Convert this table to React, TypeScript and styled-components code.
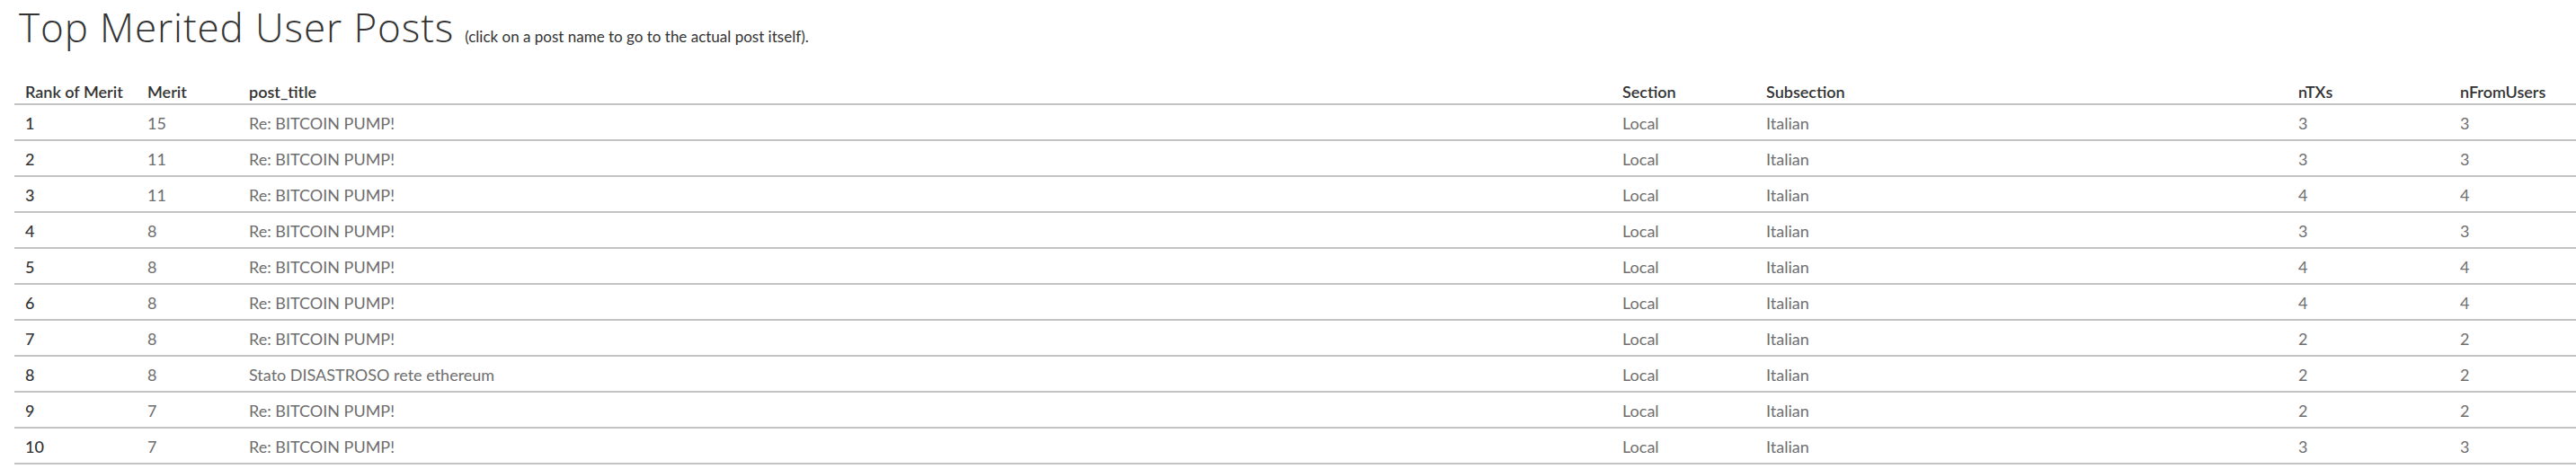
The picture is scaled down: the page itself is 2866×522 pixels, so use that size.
import React from 'react';
import styled, { createGlobalStyle } from 'styled-components';

const GlobalStyle = createGlobalStyle`
  html, body {
    margin: 0;
    padding: 0;
    background: #ffffff;
  }
  body {
    font-family: Lato, "Liberation Sans", sans-serif;
  }
`;

const rows = [
  { rank: 1, merit: 15, title: 'Re: BITCOIN PUMP!', section: 'Local', sub: 'Italian', ntx: 3, nfrom: 3 },
  { rank: 2, merit: 11, title: 'Re: BITCOIN PUMP!', section: 'Local', sub: 'Italian', ntx: 3, nfrom: 3 },
  { rank: 3, merit: 11, title: 'Re: BITCOIN PUMP!', section: 'Local', sub: 'Italian', ntx: 4, nfrom: 4 },
  { rank: 4, merit: 8, title: 'Re: BITCOIN PUMP!', section: 'Local', sub: 'Italian', ntx: 3, nfrom: 3 },
  { rank: 5, merit: 8, title: 'Re: BITCOIN PUMP!', section: 'Local', sub: 'Italian', ntx: 4, nfrom: 4 },
  { rank: 6, merit: 8, title: 'Re: BITCOIN PUMP!', section: 'Local', sub: 'Italian', ntx: 4, nfrom: 4 },
  { rank: 7, merit: 8, title: 'Re: BITCOIN PUMP!', section: 'Local', sub: 'Italian', ntx: 2, nfrom: 2 },
  { rank: 8, merit: 8, title: 'Stato DISASTROSO rete ethereum', section: 'Local', sub: 'Italian', ntx: 2, nfrom: 2 },
  { rank: 9, merit: 7, title: 'Re: BITCOIN PUMP!', section: 'Local', sub: 'Italian', ntx: 2, nfrom: 2 },
  { rank: 10, merit: 7, title: 'Re: BITCOIN PUMP!', section: 'Local', sub: 'Italian', ntx: 3, nfrom: 3 },
];

const headers = ['Rank of Merit', 'Merit', 'post_title', 'Section', 'Subsection', 'nTXs', 'nFromUsers'];

const App: React.FC = () => {
  return (
    <Page>
      <GlobalStyle />
      <TitleBar>
        <Title>Top Merited User Posts</Title>
        <Subtitle>(click on a post name to go to the actual post itself).</Subtitle>
      </TitleBar>
      <Table>
        <HeaderRow>
          {headers.map((h) => (
            <HeaderCell key={h}>{h}</HeaderCell>
          ))}
        </HeaderRow>
        {rows.map((r) => (
          <Row key={r.rank}>
            <Cell strong>{r.rank}</Cell>
            <Cell>{r.merit}</Cell>
            <Cell>{r.title}</Cell>
            <Cell>{r.section}</Cell>
            <Cell>{r.sub}</Cell>
            <Cell>{r.ntx}</Cell>
            <Cell>{r.nfrom}</Cell>
          </Row>
        ))}
      </Table>
    </Page>
  );
};

export default App;

const Page = styled.div`
  width: 2866px;
  height: 522px;
  overflow: hidden;
  background: #ffffff;
`;

const TitleBar = styled.div`
  display: flex;
  align-items: baseline;
  gap: 12px;
  height: 81px;
  padding: 0 0 0 21px;
  box-sizing: border-box;
`;

const Title = styled.span`
  font-family: "Open Sans", Lato, sans-serif;
  font-size: 44px;
  font-weight: 300;
  letter-spacing: 0.9px;
  color: #333333;
  line-height: 60px;
`;

const Subtitle = styled.span`
  font-size: 17px;
  font-weight: 400;
  color: #333333;
`;

const Table = styled.div`
  margin-left: 16px;
`;

const columns = '136px 113px 1528px 160px 592px 180px 1fr';

const HeaderRow = styled.div`
  display: grid;
  grid-template-columns: ${columns};
  align-items: end;
  height: 36px;
  box-sizing: border-box;
  padding-bottom: 2px;
  border-bottom: 2px solid #c4c4c4;
`;

const HeaderCell = styled.div`
  padding-left: 12px;
  font-size: 18px;
  font-weight: 600;
  color: #333333;
  white-space: nowrap;
`;

const Row = styled.div`
  display: grid;
  grid-template-columns: ${columns};
  align-items: center;
  height: 40px;
  box-sizing: border-box;
  padding-top: 2px;
  border-bottom: 2px solid #c4c4c4;
`;

const Cell = styled.div<{ strong?: boolean }>`
  padding-left: 12px;
  font-size: 18px;
  font-weight: ${(p) => (p.strong ? 500 : 400)};
  color: ${(p) => (p.strong ? '#333333' : '#6e6e6e')};
  white-space: nowrap;
`;
